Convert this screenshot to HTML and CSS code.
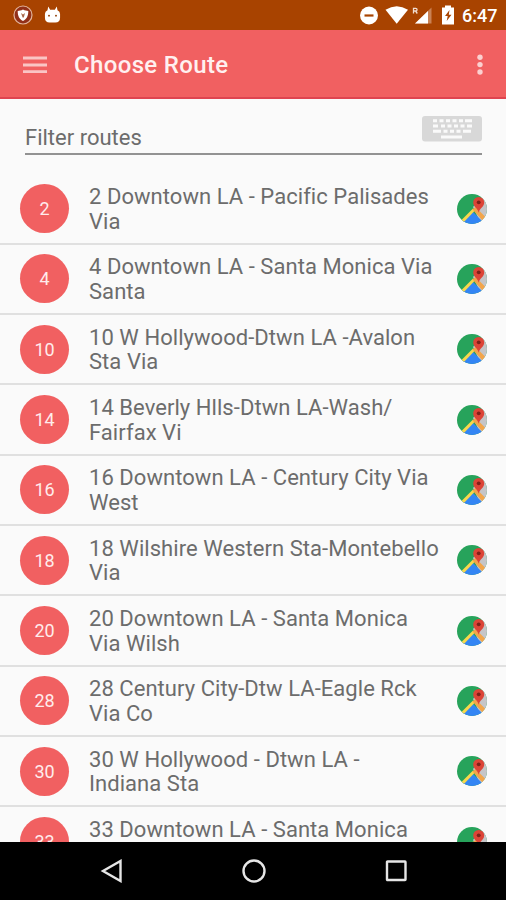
FILE: index.html
```html
<!DOCTYPE html>

<html lang="en">
<head>
    <meta charset="UTF-8"/>
    <meta name="viewport" content="width=device-width, initial-scale=1"/>
    <title>Choose Route</title>

    <link rel="stylesheet" href="styles.css">
</head>
<body>

<svg class="sprite" aria-hidden="true">
    <clipPath id="mapClip"><circle cx="15" cy="15" r="15"/></clipPath>
    <symbol id="map" viewBox="0 0 30 30">
        <g clip-path="url(#mapClip)">
            <rect width="30" height="30" fill="#27a35b"/>
            <path d="M16 13L24 4h6v26h-6z" fill="#c5c5c8"/>
            <path d="M15 17L28 30H2z" fill="#3385f4"/>
            <path d="M3.500 27L16 14.500l2 2L5 30z" fill="#f7d84c"/>
            <path d="M15.500 15.500l3-2.500L29 23.500 26 27z" fill="#f2a54a"/>
        </g>
        <path d="M21.700 3a5.500 5.500 0 0 0-5.500 5.500c0 4.500 4.500 5.200 5.500 10.300 1-5.100 5.500-5.800 5.500-10.300a5.500 5.500 0 0 0-5.500-5.500z" fill="#dc4437"/>
        <circle cx="21.700" cy="8.300" r="1.900" fill="#7c2119"/>
    </symbol>
</svg>

<div class="status-bar">
    <div class="status-left">
        <svg width="20" height="20" viewBox="0 0 20 20">
            <circle cx="10" cy="10" r="9" fill="#923018" stroke="#e2b49c" stroke-width="1.200"/>
            <path d="M10 4.600c2 1 3.600 1.300 5.300 1.300 0 5-1.500 8-5.300 10-3.800-2-5.300-5-5.300-10 1.700 0 3.300-.3 5.300-1.300z" fill="#fff"/>
            <path d="M8 8l2 1.500L12 8l-1.200 4.500H9.600z" fill="#a8674a"/>
        </svg>
        <svg width="17" height="18" viewBox="0 0 18 18">
            <path d="M4.500 0l2 3.500h5l2-3.500 .8 4Q17 5 17 8v4q0 5-5 5H6q-5 0-5-5V8q0-3 2.700-4z" fill="#fff"/>
            <circle cx="5.300" cy="9.700" r="1" fill="#8f3a00"/>
            <circle cx="12.700" cy="9.700" r="1" fill="#8f3a00"/>
        </svg>
    </div>
    <div class="status-right">
        <svg width="102" height="30" viewBox="0 0 102 30">
            <circle cx="9" cy="15.500" r="9" fill="#fff"/>
            <path d="M4.500 15.500h9" stroke="#a84300" stroke-width="2.200"/>
            <path d="M25.500 9.800Q36.700 2.700 48 9.800L36.700 23.800z" fill="#fff"/>
            <path d="M71.500 7.500v16h-16.500z" fill="#c98255"/>
            <path d="M68 11v12.500H55z" fill="#fff"/>
            <path d="M53.500 13.500V8.300h2.200a1.300 1.300 0 0 1 0 2.700h-2M55.500 11l1.800 2.500" fill="none" stroke="#f1ddd0" stroke-width="1.300"/>
            <path d="M82 7.500h3v-2h6v2h3v17H82z" fill="#fff"/>
            <path d="M89.500 10l-4.500 6h2.700l-1 5 4.800-6.300h-2.700z" fill="#a84300"/>
        </svg>
        <span class="clock">6:47</span>
    </div>
</div>

<div class="toolbar">
    <svg class="menu" width="24" height="18" viewBox="0 0 24 18">
        <path d="M0 2h24M0 9h24M0 15.700h24" stroke="#fac5c5" stroke-width="2.800"/>
    </svg>
    <h1>Choose Route</h1>
    <svg class="more" width="6" height="22" viewBox="0 0 6 22">
        <g fill="#fbd0d0">
            <circle cx="3" cy="3.200" r="2.700"/>
            <circle cx="3" cy="10.600" r="2.700"/>
            <circle cx="3" cy="18" r="2.700"/>
        </g>
    </svg>
</div>

<div class="filter">
    <span>Filter routes</span>
    <svg width="60" height="26" viewBox="0 0 60 26">
        <rect width="60" height="25.500" rx="3" fill="#d8d8d8"/>
        <g fill="none" stroke="#fafafa" stroke-width="3">
            <path d="M11 4.700h4M17.500 4.700h4M24 4.700h4M30.500 4.700h4M37 4.700h4M43 4.700h7"/>
            <path d="M11 10h5M19 10h4M25.500 10h4M32 10h4M38.500 10h4M45 10h5"/>
            <path d="M11 15.200h8M21.500 15.200h4M28 15.200h4M34.500 15.200h4M41 15.200h8"/>
            <path d="M19 21h21"/>
        </g>
    </svg>
</div>

<ul class="routes">
    <li>
        <span class="badge">2</span>
        <p>2 Downtown LA - Pacific Palisades<br>Via</p>
        <svg class="map"><use href="#map"/></svg>
    </li>
    <li>
        <span class="badge">4</span>
        <p>4 Downtown LA - Santa Monica Via<br>Santa</p>
        <svg class="map"><use href="#map"/></svg>
    </li>
    <li>
        <span class="badge">10</span>
        <p>10 W Hollywood-Dtwn LA -Avalon<br>Sta Via</p>
        <svg class="map"><use href="#map"/></svg>
    </li>
    <li>
        <span class="badge">14</span>
        <p>14 Beverly Hlls-Dtwn LA-Wash/<br>Fairfax Vi</p>
        <svg class="map"><use href="#map"/></svg>
    </li>
    <li>
        <span class="badge">16</span>
        <p>16 Downtown LA - Century City Via<br>West</p>
        <svg class="map"><use href="#map"/></svg>
    </li>
    <li>
        <span class="badge">18</span>
        <p>18 Wilshire Western Sta-Montebello<br>Via</p>
        <svg class="map"><use href="#map"/></svg>
    </li>
    <li>
        <span class="badge">20</span>
        <p>20 Downtown LA - Santa Monica<br>Via Wilsh</p>
        <svg class="map"><use href="#map"/></svg>
    </li>
    <li>
        <span class="badge">28</span>
        <p>28 Century City-Dtw LA-Eagle Rck<br>Via Co</p>
        <svg class="map"><use href="#map"/></svg>
    </li>
    <li>
        <span class="badge">30</span>
        <p>30 W Hollywood - Dtwn LA -<br>Indiana Sta</p>
        <svg class="map"><use href="#map"/></svg>
    </li>
    <li>
        <span class="badge">33</span>
        <p>33 Downtown LA - Santa Monica<br>&nbsp;</p>
        <svg class="map"><use href="#map"/></svg>
    </li>
</ul>

<div class="nav-bar">
    <svg width="24" height="24" viewBox="0 0 24 24">
        <path d="M20.500 2v20L3 12z"/>
    </svg>
    <svg width="24" height="24" viewBox="0 0 24 24">
        <circle cx="12" cy="12" r="10.500"/>
    </svg>
    <svg width="24" height="24" viewBox="0 0 24 24">
        <rect x="3" y="2.500" width="18.500" height="18.500" rx="0.500"/>
    </svg>
</div>

</body>
</html>
```

FILE: styles.css
```css
* {
    margin: 0;
    padding: 0;
    box-sizing: border-box;
}

body {
    font-family: Roboto, sans-serif;
    background: #fafafa;
    height: 900px;
    display: flex;
    flex-direction: column;
    overflow: hidden;
}

svg {
    display: block;
    flex-shrink: 0;
}

.sprite {
    position: absolute;
    width: 0;
    height: 0;
}

/* Status bar */
.status-bar {
    height: 30px;
    flex-shrink: 0;
    background: #a84300;
    display: flex;
    justify-content: space-between;
    padding: 0 9px 0 13px;
}

.status-left {
    display: flex;
    align-items: center;
    gap: 11px;
}

.status-right {
    display: flex;
    align-items: center;
    width: 137px;
}

.clock {
    color: #fff;
    font-size: 18px;
    font-weight: 500;
    line-height: 31px;
}

/* Toolbar */
.toolbar {
    height: 69px;
    flex-shrink: 0;
    background: #f16061;
    border-bottom: 2px solid #df4450;
    display: flex;
    align-items: center;
    padding: 2px 23px 0;
}

.toolbar h1 {
    flex: 1;
    margin-left: 27px;
    padding-top: 1px;
    color: #fff0f0;
    font-size: 24px;
    font-weight: 500;
    letter-spacing: 0.35px;
}

/* Filter field */
.filter {
    height: 56px;
    flex-shrink: 0;
    margin: 0 24px 0 25px;
    border-bottom: 2px solid #929292;
    display: flex;
    justify-content: space-between;
    padding-top: 17px;
    color: #6c6c6c;
    font-size: 22px;
    line-height: 43px;
}

/* Route list */
.routes {
    flex: 1;
    min-height: 0;
    overflow: hidden;
    list-style: none;
    padding-top: 19.5px;
}

.routes li {
    height: 70.33px;
    border-bottom: 2px solid #e0e0e0;
    display: flex;
    align-items: center;
    padding: 0 19px 0 20px;
}

.badge {
    width: 49px;
    height: 49px;
    flex-shrink: 0;
    border-radius: 50%;
    background: #f16061;
    color: #ffecec;
    font-size: 18px;
    line-height: 50px;
    text-align: center;
}

.routes p {
    flex: 1;
    margin-left: 20px;
    padding-top: 2px;
    color: #6c6c6c;
    font-size: 22px;
    line-height: 24.5px;
    letter-spacing: 0.05px;
    white-space: nowrap;
}

.map {
    width: 30px;
    height: 30px;
}

/* Navigation bar */
.nav-bar {
    height: 58px;
    flex-shrink: 0;
    background: #000;
    display: flex;
    align-items: center;
    justify-content: center;
    gap: 118px;
    padding-left: 1px;
}

.nav-bar svg {
    fill: none;
    stroke: #e6e6e6;
    stroke-width: 2.4;
}
```
